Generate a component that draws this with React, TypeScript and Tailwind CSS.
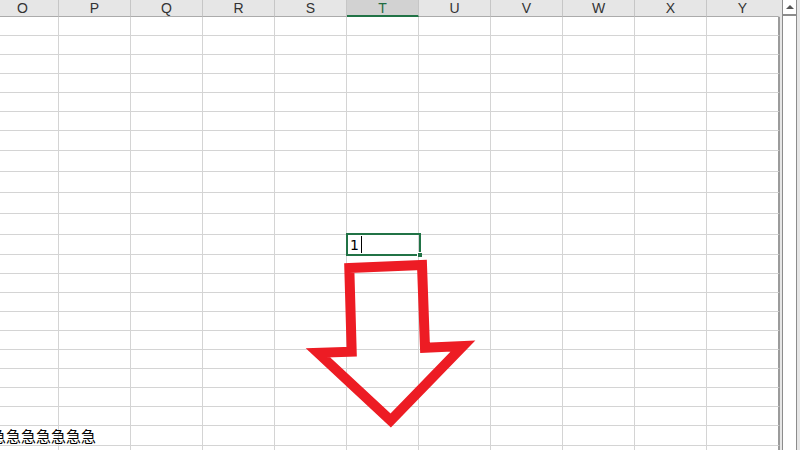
import React from "react";

const cols = ["O", "P", "Q", "R", "S", "T", "U", "V", "W", "X", "Y"];
// row heights incl. bottom gridline, measured from the sheet
const rowHeights = [19, 19, 19, 19, 19, 19, 20, 21, 21, 21, 21, 20, 19, 19, 19, 19, 19, 19, 19, 19, 19, 20, 19];
const activeRow = 11;
const activeCol = 5;
const textRow = 21;

const Cell = ({ col, row }: { col: number; row: number }) => {
  const last = col === cols.length - 1;
  return (
    <div
      className={
        last
          ? "relative w-[73px] shrink-0 border-b border-b-[#d4d4d4] border-r-2 border-r-[#9b9b9b]"
          : "relative w-[72px] shrink-0 border-b border-r border-[#d4d4d4]"
      }
    >
      {row === activeRow && col === activeCol && (
        <>
          <div className="absolute -left-[1px] -top-[2px] w-[75px] h-[23px] border-2 border-[#217346] z-10" />
          <div className="absolute left-[3px] top-0 h-full flex items-center text-[14px] text-black font-['DejaVu_Sans',sans-serif] leading-none z-20">
            1<span className="ml-[2px] w-px h-[17px] bg-black" />
          </div>
          <div className="absolute left-[70px] top-[17px] w-[5px] h-[5px] bg-[#217346] border-l border-t border-white z-20" />
        </>
      )}
      {row === textRow && col === 0 && (
        <div className="absolute left-[4px] top-0 h-full flex items-center whitespace-nowrap text-[15px] leading-none text-black font-['Noto_Sans_CJK_SC',sans-serif]">
          急急急急急急急
        </div>
      )}
    </div>
  );
};

export default function App() {
  return (
    <div className="relative w-[800px] h-[450px] overflow-hidden bg-white flex">
      <div className="w-[780px] h-full overflow-hidden">
        <div className="flex flex-col ml-[-13px]">
          <div className="flex h-[17px] bg-[#e6e6e6]">
            {cols.map((c, i) => (
              <div
                key={c}
                className={
                  i === activeCol
                    ? "w-[72px] shrink-0 bg-[#d2d2d2] border-r border-r-[#c6c6c6] border-b-2 border-b-[#217346] flex items-center justify-center text-[14px] text-[#1f6b40] font-['Liberation_Sans',sans-serif] leading-none"
                    : i === cols.length - 1
                    ? "w-[73px] shrink-0 border-b border-b-[#ababab] border-r-2 border-r-[#e6e6e6] flex items-center justify-center text-[14px] text-[#333] font-['Liberation_Sans',sans-serif] leading-none"
                    : "w-[72px] shrink-0 border-r border-r-[#c6c6c6] border-b border-b-[#ababab] flex items-center justify-center text-[14px] text-[#333] font-['Liberation_Sans',sans-serif] leading-none"
                }
              >
                {c}
              </div>
            ))}
          </div>
          {rowHeights.map((h, r) => (
            <div key={r} className="flex shrink-0" style={{ height: h }}>
              {cols.map((c, i) => (
                <Cell key={c} col={i} row={r} />
              ))}
            </div>
          ))}
        </div>
      </div>

      {/* vertical scrollbar */}
      <div className="w-[20px] h-full bg-[#e6e6e6] pl-[2px] pr-[3px]">
        <div className="h-full bg-white border-x border-[#8c8c8c] flex flex-col">
          <div className="h-[16px] border-b-2 border-[#8c8c8c] flex items-center justify-center">
            <div className="w-0 h-0 border-l-[4px] border-r-[4px] border-b-[4px] border-l-transparent border-r-transparent border-b-[#555]" />
          </div>
        </div>
      </div>

      {/* red arrow annotation */}
      <svg className="absolute left-0 top-0 pointer-events-none" width="800" height="450" viewBox="0 0 800 450">
        <polygon
          points="349.3,268 422,265 425,347.7 463,346 390.7,420.5 318,352.8 351.7,351.7"
          fill="none"
          stroke="#ed1c24"
          strokeWidth="10"
          strokeLinejoin="miter"
          strokeMiterlimit="10"
        />
      </svg>
    </div>
  );
}
